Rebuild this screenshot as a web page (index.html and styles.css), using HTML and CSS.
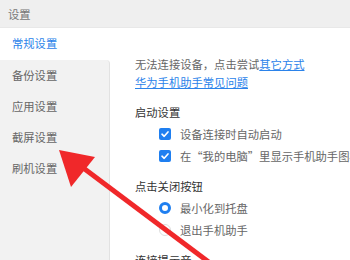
FILE: index.html
```html
<!DOCTYPE html>
<html lang="zh-CN">
<head>
  <meta charset="UTF-8">
  <title>设置</title>
  <link rel="stylesheet" href="styles.css">
</head>
<body>
  <div class="window">
    <div class="titlebar">设置</div>
    <div class="main">
      <nav class="side">
        <div class="item active">常规设置</div>
        <div class="list">
          <div class="item">备份设置</div>
          <div class="item">应用设置</div>
          <div class="item">截屏设置</div>
          <div class="item">刷机设置</div>
        </div>
      </nav>
      <section class="content">
        <p class="tip">无法连接设备，点击尝试<a href="#">其它方式</a><br><a href="#">华为手机助手常见问题</a></p>

        <h3>启动设置</h3>
        <div class="opt"><span class="check"><svg viewBox="0 0 12 12" width="12" height="12"><path d="M3 6.2 L5.2 8.3 L9 3.9" fill="none" stroke="#fff" stroke-width="1.6" stroke-linecap="round" stroke-linejoin="round"/></svg></span>设备连接时自动启动</div>
        <div class="opt"><span class="check"><svg viewBox="0 0 12 12" width="12" height="12"><path d="M3 6.2 L5.2 8.3 L9 3.9" fill="none" stroke="#fff" stroke-width="1.6" stroke-linecap="round" stroke-linejoin="round"/></svg></span>在“我的电脑”里显示手机助手图标</div>

        <h3>点击关闭按钮</h3>
        <div class="opt"><span class="radio on"></span>最小化到托盘</div>
        <div class="opt"><span class="radio"></span>退出手机助手</div>

        <h3>连接提示音</h3>
      </section>
    </div>
    <svg class="arrow" width="350" height="260" viewBox="0 0 350 260">
      <line x1="82" y1="167" x2="214" y2="266" stroke="#f0282a" stroke-width="5"/>
      <polygon points="59,150 95,157 71,187" fill="#f0282a"/>
    </svg>
  </div>
</body>
</html>
```

FILE: styles.css
```css
body { margin: 0; font-family: "Noto Sans CJK SC", "Noto Sans", sans-serif; font-size: 11.3px; background: #fff; }
.window { position: relative; width: 350px; height: 260px; overflow: hidden; display: flex; flex-direction: column; }
.titlebar { height: 28px; line-height: 28px; padding-left: 8px; background: #efefef; color: #777; box-sizing: border-box; border-bottom: 1px solid #e8e8e8; }
.main { flex: 1; display: flex; min-height: 0; }
.side { width: 110px; display: flex; flex-direction: column; flex-shrink: 0; }
.item { height: 31px; line-height: 31px; padding-left: 12px; color: #666; }
.item.active { height: 32px; line-height: 31px; color: #2b83ea; background: #fff; }
.list { flex: 1; background: #f2f2f2; border-right: 1px solid #e2e2e2; border-top-right-radius: 4px; }
.content { flex: 1; padding: 27px 0 0 25px; color: #666; white-space: nowrap; overflow: hidden; }
.tip { margin: 0 0 12px; line-height: 18px; }
.tip a { color: #2b83ea; text-decoration: underline; }
h3 { margin: 0; font-size: 11.3px; font-weight: normal; color: #333; line-height: 18px; }
.opt { display: flex; align-items: center; height: 22px; padding-left: 24px; }
.opt + h3 { margin-top: 10px; }
h3 + .opt { margin-top: 2px; }
.check { width: 12px; height: 12px; border-radius: 2px; background: #1f7ff0; margin-right: 9px; display: flex; }
.radio { width: 12px; height: 12px; border-radius: 50%; border: 1px solid #ddd; box-sizing: border-box; margin-right: 9px; }
.radio.on { border: 3.5px solid #1f7ff0; }
.arrow { position: absolute; left: 0; top: 0; pointer-events: none; }
```
